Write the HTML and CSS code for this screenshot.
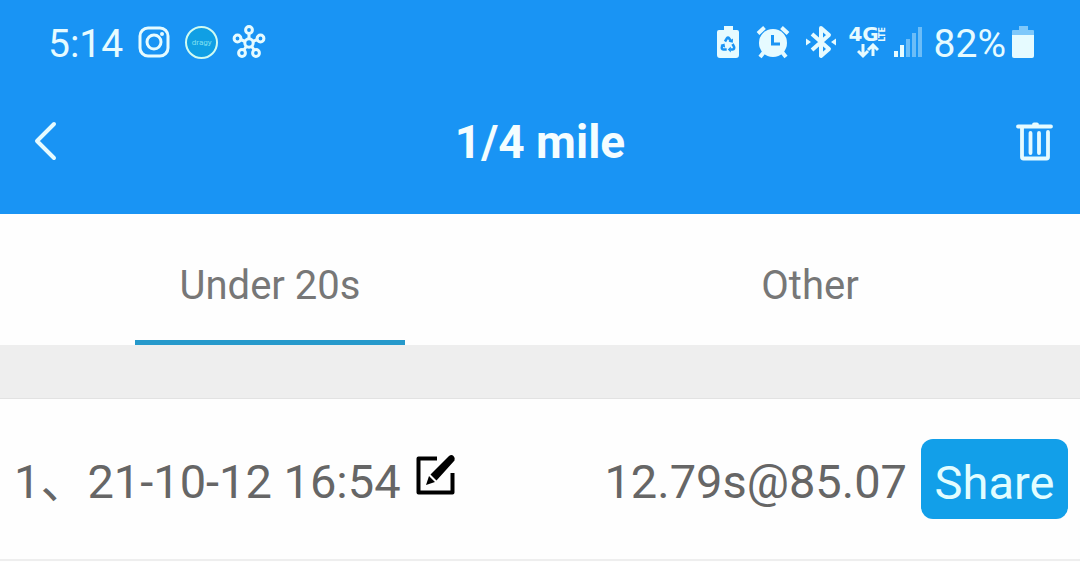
FILE: index.html
```html
<!DOCTYPE html>
<html lang="en">
<head>
<meta charset="utf-8">
<title>1/4 mile</title>
<meta name="viewport" content="width=device-width, initial-scale=1">
<link rel="stylesheet" href="styles.css">
</head>
<body>
<header class="header">
  <div class="status">
    <div class="status-left">
      <span class="time">5:14</span>
      <svg class="icon-app" viewBox="0 0 34 34" fill="none" stroke="currentColor" stroke-width="3" aria-hidden="true">
        <rect x="3" y="3" width="28" height="28" rx="8"/>
        <circle cx="17" cy="17" r="7"/>
        <circle cx="25" cy="9" r="2" fill="currentColor" stroke="none"/>
      </svg>
      <span class="dragy">dragy</span>
      <svg class="icon-app" viewBox="0 0 34 34" fill="none" stroke="currentColor" stroke-width="3" aria-hidden="true">
        <circle cx="17" cy="18" r="4.200"/>
        <circle cx="17" cy="5" r="3.400"/><circle cx="5.500" cy="13.500" r="3.400"/><circle cx="28.500" cy="13.500" r="3.400"/>
        <circle cx="10" cy="28" r="3.400"/><circle cx="24" cy="28" r="3.400"/>
        <path d="M17 8v6M8.500 14.500l4.700 2M25.500 14.500l-4.700 2M11.800 25l2.700-3.800M22.200 25l-2.700-3.800"/>
      </svg>
    </div>
    <div class="status-right">
      <svg class="icon-saver" viewBox="0 0 24 34" aria-hidden="true">
        <path fill="currentColor" d="M8 1h9v4h4q2 0 2 2v23q0 3-3 3H4q-3 0-3-3V7q0-2 2-2h5z"/>
        <g fill="none" stroke="#1994f4" stroke-width="2.600">
          <path d="M9 16.500l2-3.300q1-1.500 2 0l1.700 2.600M16.500 19l1.500 2.700q.8 2.300-1.500 2.800h-2M10.700 24.500H7.500q-2.300-.5-1.500-2.800l1-1.700"/>
        </g>
        <path fill="#1994f4" d="M12.500 16.800l4.300 1 .2-4.300zM14.800 21.500v6l-3-3zM4.300 20l4.200-1.500.7 4.200z"/>
      </svg>
      <svg class="icon-alarm" viewBox="0 0 34 34" aria-hidden="true">
        <path d="M2 8.500L8.500 2.500M25.500 2.500L32 8.500M8 27l-4 5M26 27l4 5" stroke="currentColor" fill="none" stroke-width="4"/>
        <circle cx="17" cy="18" r="14" fill="currentColor"/>
        <path d="M16.500 10v9h7.500" fill="none" stroke="#1994f4" stroke-width="3"/>
      </svg>
      <svg class="icon-bt" viewBox="0 0 30 34" aria-hidden="true">
        <path d="M6 9l17 15-8 7V3l8 7L6 25" fill="none" stroke="currentColor" stroke-width="4" stroke-linejoin="round"/>
        <path d="M0 13.500L5 17l-5 3.500zM30 13.500L25 17l5 3.500z" fill="currentColor"/>
      </svg>
      <div class="network">
        <div class="network-label"><span class="gen">4G</span><span class="lte">LTE</span></div>
        <svg class="icon-arrows" viewBox="0 0 22 16" fill="none" stroke="currentColor" stroke-width="3" aria-hidden="true"><path d="M6 1v12M1 8l5 5 5-5M16 13V2M11 7l5-5 5 5"/></svg>
      </div>
      <svg class="icon-signal" viewBox="0 0 28 30" fill="currentColor" aria-hidden="true">
        <path d="M0 24h4v6H0zM6 18h4v12H6z"/><path opacity=".4" d="M12 12h4v18h-4zM18 6h4v24h-4zM24 0h4v30h-4z"/>
      </svg>
      <span class="percent">82%</span>
      <svg class="icon-battery" viewBox="0 0 22 34" fill="currentColor" aria-hidden="true">
        <path opacity=".5" d="M7 1h9v4h5q1 0 1 1v4H0V6q0-1 1-1h6z"/><path d="M0 10h22v21q0 2-2 2H2q-2 0-2-2z"/>
      </svg>
    </div>
  </div>
  <nav class="nav">
    <button class="nav-button" type="button" aria-label="Back">
      <svg class="icon-nav" viewBox="0 0 40 40" fill="none" stroke="currentColor" stroke-width="4" stroke-linecap="round" stroke-linejoin="round" aria-hidden="true"><path d="M36 3L19 20l17 17"/></svg>
    </button>
    <h1 class="title">1/4 mile</h1>
    <button class="nav-button" type="button" aria-label="Delete">
      <svg class="icon-nav" viewBox="0 0 40 40" fill="none" stroke="currentColor" stroke-width="3.800" stroke-linecap="round" stroke-linejoin="round" aria-hidden="true"><path d="M4 5.500h33M20 3.500h3M8 7v29q0 1.500 1.500 1.500h23q1.500 0 1.500-1.500V11M16.500 12v20M25 12v20"/></svg>
    </button>
  </nav>
</header>
<main>
  <div class="tabs" role="tablist">
    <button class="tab tab-active" type="button" role="tab" aria-selected="true">Under 20s</button>
    <button class="tab" type="button" role="tab" aria-selected="false">Other</button>
  </div>
  <ol class="results">
    <li class="result">
      <span class="run">1、21-10-12 16:54</span>
      <button class="edit" type="button" aria-label="Edit">
        <svg class="icon-edit" viewBox="0 0 42 42" aria-hidden="true">
          <path d="M22 5.500H3.500v34h34V20" fill="none" stroke="currentColor" stroke-width="4" stroke-linejoin="round"/>
          <path fill="currentColor" d="M11 32l3-9 6 6zM15.500 21.500L34 3q2.500-2 4.500 0t1 4.500L21.500 27.500z"/>
        </svg>
      </button>
      <span class="score">12.79s@85.07</span>
      <button class="share" type="button">Share</button>
    </li>
  </ol>
</main>
</body>
</html>
```
FILE: styles.css
```css
* { box-sizing: border-box; }
body {
  margin: 0;
  background: #fefefe;
  color: #666;
  font-family: Roboto, "Noto Sans CJK SC", sans-serif;
}
button {
  padding: 0;
  border: 0;
  background: none;
  color: inherit;
  font: inherit;
}
svg { display: block; flex: none; }

.header { background: #1994f4; color: #e6fbff; }
.status {
  display: flex;
  justify-content: space-between;
  align-items: center;
  height: 84px;
  padding: 0 46px 0 48px;
  font-size: 39px;
}
.status-left, .status-right { display: flex; align-items: center; }
.status-left { gap: 14px; }
.status-right { gap: 6px; }
.time, .percent { line-height: 48px; padding-top: 4px; }
.icon-app { width: 34px; height: 34px; }
.dragy {
  display: grid;
  place-items: center;
  width: 33px;
  height: 33px;
  border: 2px solid #d0fbf2;
  border-radius: 50%;
  background: #109fe4;
  color: #7fe0f0;
  font-size: 8px;
}
.icon-saver { width: 24px; height: 34px; margin-right: 10px; }
.icon-alarm { width: 34px; height: 34px; margin-right: 10px; }
.icon-bt { width: 30px; height: 34px; margin-right: 6px; }
.network { display: flex; flex-direction: column; align-items: center; width: 40px; }
.network-label { display: flex; align-items: center; height: 18px; }
.gen { font: bold 20px/18px "DejaVu Sans", sans-serif; }
.lte { font: bold 8px/8px "DejaVu Sans", sans-serif; writing-mode: vertical-rl; transform: rotate(180deg); }
.icon-arrows { width: 22px; height: 16px; }
.icon-signal { width: 28px; height: 30px; margin-right: 6px; }
.icon-battery { width: 22px; height: 34px; }

.nav {
  display: flex;
  align-items: center;
  justify-content: space-between;
  height: 130px;
  padding: 0 26px 16px 18px;
}
.nav-button { display: flex; }
.icon-nav { width: 40px; height: 40px; }
.title { margin: 0; padding: 2px 0 0 8px; color: #f4fdff; font-size: 46px; line-height: 56px; font-weight: 700; }

.tabs { display: flex; height: 131px; }
.tab {
  display: flex;
  flex: 1;
  flex-direction: column;
  align-items: center;
  justify-content: space-between;
  padding-top: 47px;
  color: #777;
  font-size: 40px;
  line-height: 50px;
}
.tab-active::after { content: ""; width: 50%; height: 5px; background: #2699cb; }

.results {
  margin: 0;
  padding: 0;
  border-top: 53px solid #eee;
  list-style: none;
}
.result {
  display: flex;
  align-items: center;
  height: 163px;
  padding: 0 12px;
  border-top: 1px solid #e2e2e2;
  border-bottom: 2px solid #eee;
  font-size: 47px;
  line-height: 80px;
}
.run, .score { padding-top: 6px; }
.run { padding-left: 2px; }
.edit { margin-left: 14px; padding-bottom: 10px; color: #000; }
.icon-edit { width: 42px; height: 42px; }
.score { margin-left: auto; }
.share {
  width: 147px;
  height: 80px;
  margin-left: 14px;
  padding-top: 4px;
  border-radius: 12px;
  background: #129fe9;
  color: #e2fdff;
}
```
